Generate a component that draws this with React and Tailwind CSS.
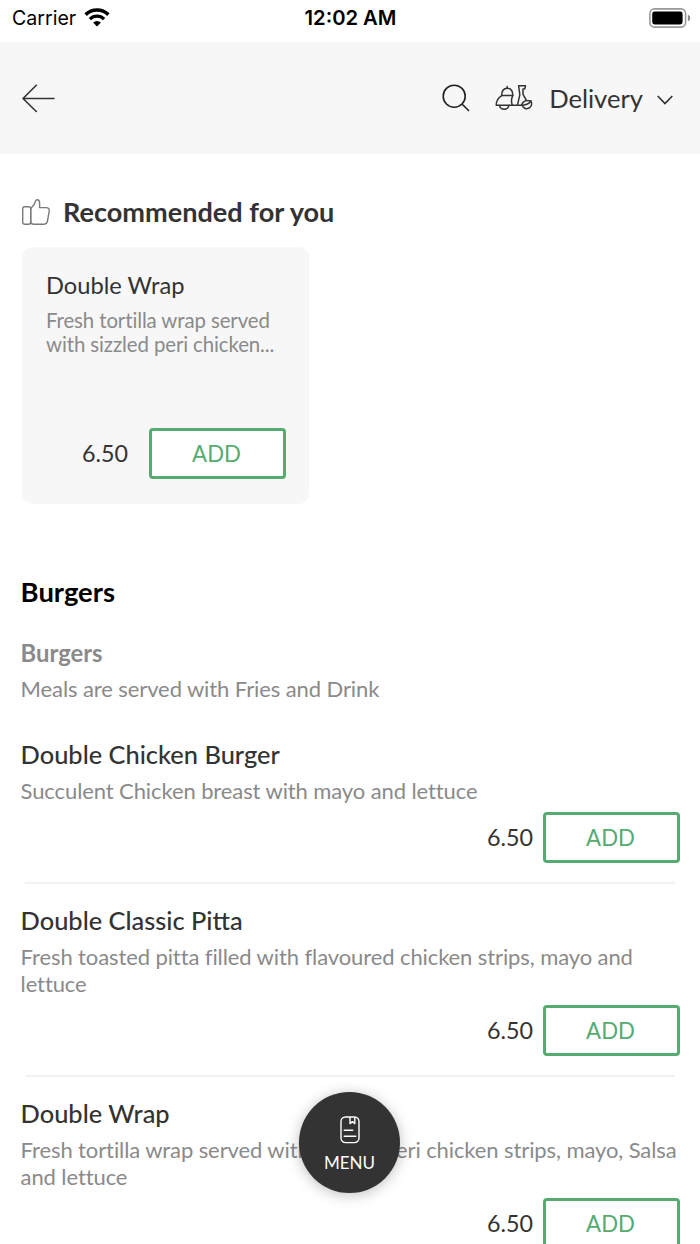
import React, { useState } from "react";

const recommended = [
  {
    id: 1,
    name: "Double Wrap",
    description: "Fresh tortilla wrap served with sizzled peri chicken...",
    price: "6.50",
  },
];

const burgers = [
  {
    id: 1,
    name: "Double Chicken Burger",
    description: "Succulent Chicken breast with mayo and lettuce",
    price: "6.50",
  },
  {
    id: 2,
    name: "Double Classic Pitta",
    description:
      "Fresh toasted pitta filled with flavoured chicken strips, mayo and lettuce",
    price: "6.50",
  },
  {
    id: 3,
    name: "Double Wrap",
    description:
      "Fresh tortilla wrap served with sizzled peri chicken strips, mayo, Salsa and lettuce",
    price: "6.50",
  },
];

const WifiIcon = () => (
  <svg className="w-[26px] h-[19px]" viewBox="0 0 26 19" fill="none">
    <path d="M1.6 6.6a16.4 16.4 0 0 1 22.8 0" stroke="#000" strokeWidth="3.6" />
    <path d="M5.9 11.1a10.2 10.2 0 0 1 14.2 0" stroke="#000" strokeWidth="3.3" />
    <path d="M13 18.6l-3.9-4a5.6 5.6 0 0 1 7.8 0z" fill="#000" />
  </svg>
);

const BatteryIcon = () => (
  <svg className="w-[42px] h-[20px]" viewBox="0 0 42 20" fill="none">
    <rect x="0.9" y="0.9" width="35.7" height="18.2" rx="4.6" stroke="#9a9a9a" strokeWidth="1.6" />
    <rect x="3.2" y="3.6" width="30.4" height="12.8" rx="2.4" fill="#000" />
    <path d="M38.9 6.8c1.7.6 2.3 1.7 2.3 3.2s-.6 2.6-2.3 3.2z" fill="#8a8a8a" />
  </svg>
);

const BackIcon = () => (
  <svg className="w-[33px] h-[29px]" viewBox="0 0 33 29" fill="none" stroke="#333" strokeWidth="1.6" strokeLinecap="round" strokeLinejoin="round">
    <path d="M32 14.5H1M14.3 1.2L1 14.5l13.3 13" />
  </svg>
);

const SearchIcon = () => (
  <svg className="w-[28px] h-[28px]" viewBox="0 0 28 28" fill="none" stroke="#222" strokeWidth="1.6">
    <circle cx="12.2" cy="12.2" r="11" />
    <path d="M20 20l7 7" />
  </svg>
);

const ScooterIcon = () => (
  <svg className="w-[38px] h-[27px]" viewBox="0 0 38 27" fill="none" stroke="#333" strokeWidth="1.5" strokeLinejoin="round" strokeLinecap="round">
    <path d="M6.7 11.6c0-4.7 2.2-7.3 5.5-7.3s5.6 2.6 5.6 7.3z" />
    <path d="M12.2 4V2.400" />
    <path d="M6.7 11.6C3.2 13.8 1.2 17 1.2 21.2h16.200c-1.300-3.200-1.200-6.600.4-9.600" />
    <path d="M4.500 21.400a4.800 4.800 0 0 0 9.400 0" />
    <path d="M17.400 21.200H27.500c3.600-.2 6.600-1.500 8.800-4.200l-4.900-.6L28 10.400V5.100l1.800-.3.700-3h-6.900l.6 4.200.6 4.800-2.300 10.400" />
    <path d="M26.400 21.200c1-2.600 2.600-4.300 5-4.800" />
    <path d="M27.200 21.500a4.800 4.800 0 1 0 9.100-3.500" />
  </svg>
);

const ThumbIcon = () => (
  <svg className="w-[28px] h-[27px]" viewBox="0 0 28 27" fill="none" stroke="#7a7a7a" strokeWidth="1.4" strokeLinejoin="round">
    <rect x="0.7" y="7.8" width="8" height="17.5" rx="2" />
    <path d="M8.700 11c0-1.400.5-2.200 1.600-3.200 1.700-1.600 2.500-3.500 3-5.300.4-1.300 1-1.800 2-1.800 1.600 0 2.300 1.200 2.300 3v4.900h6.500c2.300 0 3.500 1.400 3.100 3.600l-1.700 9.700c-.4 2.300-1.700 3.400-4.100 3.400h-9.700c-2 0-3-1-3-3z" />
  </svg>
);

const MenuIcon = () => (
  <svg className="w-[20px] h-[28px]" viewBox="0 0 20 28" fill="none" stroke="#fff" strokeWidth="1.4" strokeLinejoin="round">
    <rect x="1" y="1" width="18" height="25.6" rx="4.5" />
    <path d="M10 1v6.600l2.400-2 2.400 2V1" />
    <path d="M4.200 14.200h8.600M4.200 20.200h11.600" strokeLinecap="round" />
  </svg>
);

const AddButton = ({ onClick }) => (
  <button
    onClick={onClick}
    className="w-[137px] h-[51px] pr-[2px] pt-px rounded-[4px] border-3 border-[#55ab70] bg-white text-[#55ab70] text-[22.2px] leading-none cursor-pointer"
  >
    ADD
  </button>
);

const MenuItem = ({ item, onAdd }) => (
  <div className="pt-[20px]">
    <h3 className="text-[25.4px] leading-[32px] font-['Lato_Medium','Lato',sans-serif] font-medium text-[#333]">{item.name}</h3>
    <p className="mt-2 text-[22px] tracking-[-0.1px] leading-[26.5px] text-[#8a8a8a]">{item.description}</p>
    <div className="mt-[7.8px] -mr-px flex items-center justify-end gap-[10px]">
      <span className="text-[23.3px] text-[#333]">{item.price}</span>
      <AddButton onClick={onAdd} />
    </div>
    <div className="mt-[19px] mx-1 h-[2px] bg-[#f2f2f2]" />
  </div>
);

const App = () => {
  const [, setCart] = useState([]);
  const addToCart = (item) => setCart((prev) => [...prev, item]);

  return (
    <div className="relative w-[700px] h-[1244px] overflow-hidden bg-white font-['Lato',sans-serif]">
      {/* Status bar */}
      <div className="h-[42px] pl-[10px] pr-[9px] pb-[7px] grid grid-cols-3 items-center font-['Inter',sans-serif] text-[19.6px] text-black">
        <div className="flex items-center gap-2 pl-[2px]">
          <span className="pt-[2px]">Carrier</span>
          <WifiIcon />
        </div>
        <span className="pt-px text-center text-[20.2px] font-semibold">12:02 AM</span>
        <div className="flex justify-end">
          <BatteryIcon />
        </div>
      </div>

      {/* Header */}
      <div className="h-[112px] pl-[22px] pr-[27px] flex items-center justify-between bg-[#f7f7f7]">
        <button className="cursor-pointer">
          <BackIcon />
        </button>
        <div className="flex items-center">
          <SearchIcon />
          <span className="ml-[25px]">
            <ScooterIcon />
          </span>
          <span className="ml-[16px] pt-px text-[25.6px] text-[#333]">Delivery</span>
          <svg className="ml-[14px] mt-1 w-[16px] h-[10px]" viewBox="0 0 16 10" fill="none" stroke="#333" strokeWidth="1.7">
            <path d="M.7 1L8 8.600 15.300 1" />
          </svg>
        </div>
      </div>

      {/* Recommended */}
      <div className="pt-[41px] px-[22px]">
        <div className="flex items-center gap-[13px] h-[34px]">
          <ThumbIcon />
          <h2 className="text-[27.1px] font-bold text-[#333]">Recommended for you</h2>
        </div>
        {recommended.map((item) => (
          <div
            key={item.id}
            className="mt-[18px] w-[287px] h-[257px] rounded-[10px] bg-[#f7f7f7] pt-[23px] pb-[25px] pl-6 pr-[23px] flex flex-col justify-between"
          >
            <div>
              <h3 className="text-[23.7px] leading-[30px] text-[#333]">{item.name}</h3>
              <p className="mt-2 text-[20.4px] tracking-[-0.1px] leading-[24.4px] text-[#8a8a8a]">
                {item.description}
              </p>
            </div>
            <div className="flex items-center justify-end gap-[21px]">
              <span className="text-[23.3px] text-[#333]">{item.price}</span>
              <AddButton onClick={() => addToCart(item)} />
            </div>
          </div>
        ))}
      </div>

      {/* Burgers */}
      <div className="pt-[72px] pl-[20.6px] pr-[21px]">
        <h2 className="text-[27.4px] leading-[32px] font-bold text-black">Burgers</h2>
        <h4 className="mt-[31px] text-[23.8px] leading-[28px] font-bold text-[#8a8a8a]">Burgers</h4>
        <p className="mt-[8px] text-[22px] tracking-[-0.1px] leading-[27px] text-[#8a8a8a]">
          Meals are served with Fries and Drink
        </p>
        <div className="mt-4">
          {burgers.map((item) => (
            <MenuItem key={item.id} item={item} onAdd={() => addToCart(item)} />
          ))}
        </div>
      </div>

      {/* Floating menu button */}
      <button className="absolute left-[299px] top-[1091.5px] w-[101px] h-[101px] rounded-full bg-[#333] text-white flex flex-col items-center pt-[24.5px] shadow-[0_2px_14px_rgba(0,0,0,0.25)] cursor-pointer">
        <MenuIcon />
        <span className="mt-[7.5px] text-[17px] leading-[22px]">MENU</span>
      </button>
    </div>
  );
};

export default App;
